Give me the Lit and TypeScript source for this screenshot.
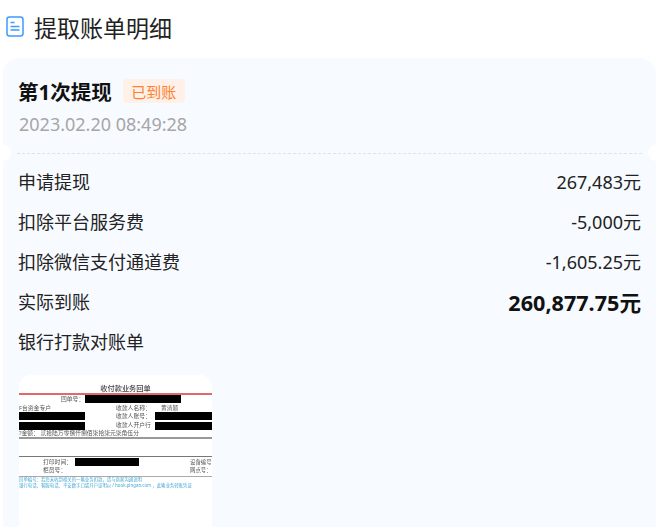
import { LitElement, html, css } from "lit";
import { customElement } from "lit/decorators.js";

const rows = [
  ["申请提现", "267,483元"],
  ["扣除平台服务费", "-5,000元"],
  ["扣除微信支付通道费", "-1,605.25元"],
];

// items positioned on the receipt picture: [x, y, text, extra class]
const texts: [number, number, string, string][] = [
  [42, 400, "回单号：", ""],
  [0, 409, "F台资金专户", ""],
  [97, 409, "收款人名称：", ""],
  [142, 409, "黄清颖", ""],
  [97, 417, "收款人账号：", ""],
  [97, 426, "收款人开户行", ""],
  [0, 434, "?金额：  贰拾陆万零捌仟捌佰柒拾柒元柒角伍分", ""],
  [24, 463, "打印时间：", ""],
  [171, 463, "设备编号", "sm"],
  [24, 471, "柜员号：", ""],
  [171, 471, "网点号：", "sm"],
  [0, 480, "回单编号：若您未收到相关的一笔业务扣款，请与商家沟通说明", "cy"],
  [0, 486, "银行电话、客服电话、平安数字口袋开户证明以 / hook.pingan.com ，此笔业务转账凭证", "cy"],
];
const blocks: [number, number, number, number][] = [
  [66, 396, 96, 8],
  [0, 413, 66, 8],
  [0, 423, 66, 8],
  [136, 413, 57, 8],
  [136, 423, 57, 8],
  [56, 459, 64, 8],
];

@customElement("app-root")
export class AppRoot extends LitElement {
  static styles = css`
    :host {
      display: block;
      width: 668px;
      height: 527px;
      overflow: hidden;
      background: #fff;
      font-family: "Noto Sans", "Noto Sans CJK SC", sans-serif;
      color: #1a1a1a;
    }
    .head {
      display: flex;
      align-items: center;
      gap: 10px;
      height: 58px;
      padding: 0 0 5px 6px;
      box-sizing: border-box;
      font-size: 23px;
      color: #222;
    }
    .head svg { display: block; }
    .card {
      position: relative;
      margin: 0 12px 0 3px;
      height: 469px;
      border-radius: 16px 16px 0 0;
      background: #f7faff;
      overflow: hidden;
    }
    .top {
      height: 95px;
      box-sizing: border-box;
      padding: 18px 15px 0 16px;
    }
    .title {
      display: flex;
      align-items: center;
      gap: 11px;
      height: 30px;
      font-size: 20.5px;
      font-weight: 700;
      color: #111;
    }
    .title span:first-child { margin-left: -1px; }
    .tag {
      height: 24px;
      width: 62px;
      display: flex;
      align-items: center;
      justify-content: center;
      border-radius: 4px;
      background: #fff1e8;
      color: #ff8030;
      font-size: 15px;
      font-weight: 400;
    }
    .time {
      margin-top: 3px;
      font-size: 18px;
      line-height: 30px;
      color: #a6a6a6;
    }
    .dash {
      margin: 0 14px;
      border-top: 1px dashed #dfe2e8;
    }
    .notch {
      position: absolute;
      top: 87px;
      width: 16px;
      height: 16px;
      border-radius: 50%;
      background: #fff;
    }
    .notch.l { left: -8px; }
    .notch.r { right: -8px; }
    .rows { padding: 7px 15px 0 15px; }
    .row {
      display: flex;
      justify-content: space-between;
      align-items: center;
      height: 40px;
      font-size: 18px;
      color: #222;
    }
    .row .big { font-size: 21.6px; font-weight: 700; color: #111; }
    .receipt {
      position: absolute;
      left: 16px;
      top: 317px;
      width: 193px;
      height: 160px;
      border-radius: 12px 12px 0 0;
      background: #fff;
      overflow: hidden;
    }
    .inner {
      position: absolute;
      left: 0;
      top: -375px;
      width: 193px;
      height: 527px;
      filter: blur(0.55px);
    }
    .t {
      position: absolute;
      transform: translateY(-50%);
      white-space: nowrap;
      font-size: 5.8px;
      line-height: 8px;
      color: #555;
    }
    .t.sm { font-size: 5.4px; }
    .t.cy { font-size: 4.4px; color: #45a9d4; }
    .rt {
      position: absolute;
      left: 20px;
      right: 0;
      top: 382px;
      text-align: center;
      font-size: 7.2px;
      font-weight: 500;
      line-height: 12px;
      color: #444;
    }
    .ln { position: absolute; left: 0; right: 0; height: 1px; background: #999; }
    .ln.red { top: 393px; height: 2px; background: #e06a6a; }
    .ln.a { top: 437px; height: 1.5px; }
    .ln.b { top: 456px; background: #777; }
    .ln.c { top: 476px; background: #aaa; }
    .bk { position: absolute; background: #000; }
  `;

  render() {
    return html`
      <div class="head">
        <svg width="18" height="21" viewBox="0 0 18 21" fill="none">
          <rect x="1" y="1" width="16" height="19" rx="2.5" stroke="#3d9bff" stroke-width="1.5"/>
          <path d="M4.5 6.5h4M4.5 10.5h9M4.5 14h9" stroke="#3d9bff" stroke-width="1.4"/>
        </svg>
        <span>提取账单明细</span>
      </div>
      <div class="card">
        <div class="top">
          <div class="title"><span>第1次提现</span><span class="tag">已到账</span></div>
          <div class="time">2023.02.20 08:49:28</div>
        </div>
        <div class="dash"></div>
        <i class="notch l"></i><i class="notch r"></i>
        <div class="rows">
          ${rows.map((r) => html`<div class="row"><span>${r[0]}</span><span>${r[1]}</span></div>`)}
          <div class="row"><span>实际到账</span><span class="big">260,877.75元</span></div>
          <div class="row"><span>银行打款对账单</span></div>
        </div>
        <div class="receipt">
          <div class="inner">
            <div class="rt">收付款业务回单</div>
            <div class="ln red"></div>
            <div class="ln a"></div>
            <div class="ln b"></div>
            <div class="ln c"></div>
            ${blocks.map(
              (b) => html`<div class="bk" style="left:${b[0]}px;top:${b[1] - 1}px;width:${b[2]}px;height:${b[3]}px"></div>`
            )}
            ${texts.map(
              (t) => html`<div class="t ${t[3]}" style="left:${t[0]}px;top:${t[1] - 1}px">${t[2]}</div>`
            )}
          </div>
        </div>
      </div>
    `;
  }
}
